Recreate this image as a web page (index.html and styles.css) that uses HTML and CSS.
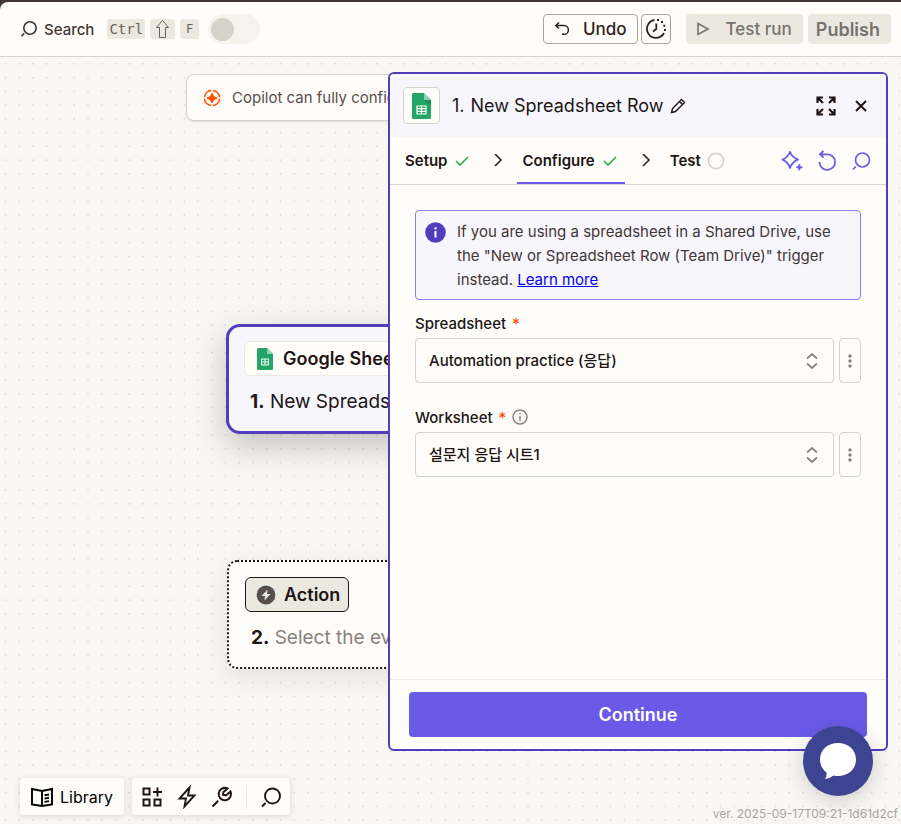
FILE: index.html
```html
<!DOCTYPE html>
<html lang="en">
<head>
<meta charset="utf-8">
<meta name="viewport" content="width=device-width, initial-scale=1">
<title>Zap editor</title>
<link rel="stylesheet" href="styles.css">
</head>
<body>
<div class="app">
  <header class="topbar">
    <button class="search" type="button">
      <svg width="18" height="18" viewBox="0 0 18 18" fill="none" stroke="currentColor" stroke-width="1.6"><circle cx="10" cy="8" r="6.200"/><path d="M4.200 13.400 1.500 16.200"/></svg>
      Search
    </button>
    <div class="keys">
      <kbd>Ctrl</kbd>
      <kbd><svg width="15" height="20" viewBox="0 0 15 20" fill="none" stroke="currentColor"><path d="M7.500 1.500 13.500 8.500H10.500V18.500H4.500V8.500H1.500Z"/></svg></kbd>
      <kbd class="small">F</kbd>
    </div>
    <label class="toggle"><input type="checkbox" aria-label="Publish Zap"><span class="knob"></span></label>
    <div class="actions">
      <button class="btn outline undo" type="button">
        <svg width="16" height="16" viewBox="0 0 16 16" fill="none" stroke="currentColor" stroke-width="1.500"><path d="M5 1.500 1.800 4.500 5 7.500M2 4.500H10A4.400 4.400 0 0 1 10 13.300H8"/></svg>
        Undo
      </button>
      <button class="btn outline history" type="button" aria-label="History">
        <svg width="22" height="22" viewBox="0 0 22 22" fill="none" stroke="currentColor" stroke-width="1.800"><path d="M9.500 2A9 9 0 1 0 19 15"/><path d="M11.300 5.500V11L8 13.500"/><path d="M12 2h2M16 4h2M18.300 7.800h2M19 12h2" stroke-width="2"/></svg>
      </button>
      <button class="btn muted test" type="button">
        <svg width="14" height="16" viewBox="0 0 14 16" fill="none" stroke="currentColor" stroke-width="1.600"><path d="M2 2.500 12 8 2 13.500Z"/></svg>
        Test run
      </button>
      <button class="btn muted publish" type="button">Publish</button>
    </div>
  </header>

  <main class="canvas">
    <svg class="dots" width="100%" height="100%" aria-hidden="true">
      <defs>
        <pattern id="dots" width="55" height="55" patternUnits="userSpaceOnUse">
          <g fill="#dddbd4">
            <circle cx="5.500" cy="6.800" r="0.900"/><circle cx="19.250" cy="6.800" r="0.900"/><circle cx="33" cy="6.800" r="0.900"/><circle cx="46.750" cy="6.800" r="0.900"/>
            <circle cx="5.500" cy="20.550" r="0.900"/><circle cx="19.250" cy="20.550" r="0.900"/><circle cx="33" cy="20.550" r="0.900"/><circle cx="46.750" cy="20.550" r="0.900"/>
            <circle cx="5.500" cy="34.300" r="0.900"/><circle cx="19.250" cy="34.300" r="0.900"/><circle cx="33" cy="34.300" r="0.900"/><circle cx="46.750" cy="34.300" r="0.900"/>
            <circle cx="5.500" cy="48.050" r="0.900"/><circle cx="19.250" cy="48.050" r="0.900"/><circle cx="33" cy="48.050" r="0.900"/><circle cx="46.750" cy="48.050" r="0.900"/>
          </g>
        </pattern>
      </defs>
      <rect width="100%" height="100%" fill="url(#dots)"/>
    </svg>

    <div class="copilot">
      <svg width="18" height="18" viewBox="0 0 18 18" fill="none"><circle cx="9" cy="9" r="7.600" stroke="#ff4f00" stroke-width="1.600" stroke-dasharray="10.340 1.600" stroke-dashoffset="-0.800"/><path d="M9 4Q9.800 8.200 14 9 9.800 9.800 9 14 8.200 9.800 4 9 8.200 8.200 9 4Z" fill="#ff4f00" stroke="#ff4f00" stroke-width="1.300"/></svg>
      <span>Copilot can fully configure this Zap for you</span>
    </div>

    <article class="node selected">
      <div class="chip app-chip">
        <svg width="16" height="22" viewBox="0 0 16 22"><path d="M1.500 0H10L16 6V20.500Q16 22 14.500 22H1.500Q0 22 0 20.500V1.500Q0 0 1.500 0Z" fill="#23a566"/><path d="M10 0 16 6H10Z" fill="#8ed1b1"/><path d="M4.500 11h7v6h-7zM8 11v6M4.500 14h7" fill="none" stroke="#fff"/></svg>
        Google Sheets
      </div>
      <p class="node-title"><strong>1.</strong> New Spreadsheet Row</p>
    </article>

    <article class="node empty">
      <div class="chip action-chip">
        <svg width="20" height="20" viewBox="0 0 20 20"><circle cx="10" cy="10" r="9.400" fill="#574e4c"/><path d="M11.500 4.500 5.500 11H9L8.500 15.500 14.500 9H11Z" fill="#ebe9df"/></svg>
        Action
      </div>
      <p class="node-title"><strong>2.</strong> <span>Select the event for your Zap to run</span></p>
    </article>

    <nav class="dock">
      <div class="dock-group">
        <button class="library" type="button">
          <svg width="22" height="22" viewBox="0 0 22 22" fill="none" stroke="currentColor" stroke-width="1.900"><path d="M1 3 11 5 21 3V18.500L11 20 1 18.500ZM11 5V20M13.500 9.300 18 8.500M13.500 12.600 18 11.800M13.500 15.900 18 15.100"/></svg>
          Library
        </button>
      </div>
      <div class="dock-group tools">
        <button type="button" aria-label="Add app"><svg width="22" height="22" viewBox="0 0 22 22" fill="none" stroke="currentColor" stroke-width="2"><path d="M2.500 2.500h6v6h-6zM2.500 13.500h6v6h-6zM13.500 13.500h6v6h-6zM16.500 1.500v9M12 6h9"/></svg></button>
        <button type="button" aria-label="Zap runs"><svg width="22" height="24" viewBox="0 0 22 24" fill="none" stroke="currentColor" stroke-width="1.900"><path d="M13.500 2.500 3.500 13.500H10L8.500 21.500 18.500 10.500H12Z"/></svg></button>
        <button type="button" aria-label="Settings"><svg width="22" height="22" viewBox="0 0 22 22" fill="none" stroke="currentColor" stroke-width="2"><path d="M7.200 14.800 1.500 20.500M16.500 2.500A6.200 6.200 0 1 0 19.500 5.500L15 9.500 12 8.800 12.500 6Z"/></svg></button>
        <span class="rule"></span>
        <button type="button" aria-label="Search steps"><svg width="22" height="22" viewBox="0 0 22 22" fill="none" stroke="currentColor" stroke-width="1.900"><circle cx="12.500" cy="10" r="7.500"/><path d="M5.500 17 2 20.500"/></svg></button>
      </div>
    </nav>
    <p class="version">ver. 2025-09-17T09:21-1d61d2cf</p>

    <section class="panel">
      <header class="panel-head">
        <span class="app-icon"><svg width="20" height="26" viewBox="0 0 20 26"><path d="M1.500 0H12L19 7V24.500Q19 26 17.500 26H1.500Q0 26 0 24.500V1.500Q0 0 1.500 0Z" fill="#23a566"/><path d="M12 7 19 13V7Z" fill="#1c8f57"/><path d="M12 0 19 7H12Z" fill="#8ed1b1"/><path d="M5 13h9v8H5zM9.500 13v8M5 15.700h9M5 18.300h9" fill="none" stroke="#fff" stroke-width="1.200"/></svg></span>
        <h2><span>1.</span> <span>New Spreadsheet Row</span></h2>
        <button class="icon edit" type="button" aria-label="Rename"><svg width="16" height="16" viewBox="0 0 16 16" fill="none" stroke="currentColor" stroke-width="1.400"><path d="M1.500 14.500 2.500 10.500 11.500 1.500 14.500 4.500 5.500 13.500ZM9.500 3.500 12.500 6.500"/></svg></button>
        <button class="icon expand" type="button" aria-label="Expand"><svg width="20" height="20" viewBox="0 0 20 20" fill="none" stroke="currentColor" stroke-width="2.200"><path d="M1.500 7V1.500H7M1.500 1.500 7 7M13 1.500H18.500V7M18.500 1.500 13 7M1.500 13V18.500H7M1.500 18.500 7 13M18.500 13V18.500H13M18.500 18.500 13 13"/></svg></button>
        <button class="icon" type="button" aria-label="Close"><svg width="12" height="12" viewBox="0 0 12 12" fill="none" stroke="currentColor" stroke-width="2"><path d="M1 1 11 11M11 1 1 11"/></svg></button>
      </header>
      <nav class="tabs">
        <a class="tab" href="#setup">Setup <svg width="14" height="12" viewBox="0 0 14 12" fill="none" stroke="#2fae4e" stroke-width="1.700"><path d="M1 6 5 10 13 2"/></svg></a>
        <svg class="sep" width="10" height="14" viewBox="0 0 10 14" fill="none" stroke="currentColor" stroke-width="1.600"><path d="M2 0 8 6 2 12"/></svg>
        <a class="tab current" href="#configure">Configure <svg width="14" height="12" viewBox="0 0 14 12" fill="none" stroke="#2fae4e" stroke-width="1.700"><path d="M1 6 5 10 13 2"/></svg></a>
        <svg class="sep" width="10" height="14" viewBox="0 0 10 14" fill="none" stroke="currentColor" stroke-width="1.600"><path d="M2 0 8 6 2 12"/></svg>
        <a class="tab" href="#test">Test <svg width="18" height="18" viewBox="0 0 18 18" fill="none" stroke="#d7d3c9" stroke-width="1.600"><circle cx="9" cy="9" r="7.600"/></svg></a>
        <div class="tab-tools">
          <button class="icon" type="button" aria-label="Copilot"><svg width="22" height="22" viewBox="0 0 22 22" fill="none" stroke="currentColor" stroke-width="1.800"><path d="M9 1.800Q11 7.500 17 9.700 11 12 9 18 7 12 1.500 9.700 7 7.500 9 1.800Z" stroke-linejoin="round"/><path d="M18.300 14.200v6M15.300 17.200h6" stroke-width="2"/></svg></button>
          <button class="icon" type="button" aria-label="Reset"><svg width="20" height="22" viewBox="0 0 20 22" fill="none" stroke="currentColor" stroke-width="1.800"><path d="M6.500 1 3 4.300 6.500 7.500M3 4.300H10.500A7.800 7.800 0 1 1 2.500 12"/></svg></button>
          <button class="icon" type="button" aria-label="Search fields"><svg width="20" height="20" viewBox="0 0 20 20" fill="none" stroke="currentColor" stroke-width="1.700"><circle cx="11.500" cy="9" r="7"/><path d="M4.800 15.500 2 18.300"/></svg></button>
        </div>
      </nav>
      <div class="panel-body">
        <div class="notice">
          <svg width="21" height="21" viewBox="0 0 21 21"><circle cx="10.500" cy="10.500" r="10.300" fill="#503ebd"/><path d="M10.500 5.200v2.200M10.500 9v6.500" stroke="#fff" stroke-width="2"/></svg>
          <p>If you are using a spreadsheet in a Shared Drive, use the "New or Spreadsheet Row (Team Drive)" trigger instead. <a href="#learn">Learn more</a></p>
        </div>
        <div class="field">
          <div class="label-row"><label for="spreadsheet">Spreadsheet</label><span class="req">*</span></div>
          <div class="control">
            <div class="select">
              <select id="spreadsheet"><option>Automation practice (응답)</option></select>
              <svg width="12" height="16" viewBox="0 0 12 16" fill="none" stroke="currentColor" stroke-width="1.800"><path d="M1 5.500 6 1 11 5.500M1 10.500 6 15 11 10.500"/></svg>
            </div>
            <button class="more" type="button" aria-label="Spreadsheet options"><svg width="4" height="16" viewBox="0 0 4 16" fill="currentColor"><circle cx="2" cy="3" r="1.700"/><circle cx="2" cy="8" r="1.700"/><circle cx="2" cy="13" r="1.700"/></svg></button>
          </div>
        </div>
        <div class="field">
          <div class="label-row"><label for="worksheet">Worksheet</label><span class="req">*</span>
            <svg width="16" height="16" viewBox="0 0 16 16" fill="none" stroke="#88827e" stroke-width="1.500"><circle cx="8" cy="8" r="7"/><path d="M8 4v1.600M8 7v5"/></svg></div>
          <div class="control">
            <div class="select">
              <select id="worksheet"><option>설문지 응답 시트1</option></select>
              <svg width="12" height="16" viewBox="0 0 12 16" fill="none" stroke="currentColor" stroke-width="1.800"><path d="M1 5.500 6 1 11 5.500M1 10.500 6 15 11 10.500"/></svg>
            </div>
            <button class="more" type="button" aria-label="Worksheet options"><svg width="4" height="16" viewBox="0 0 4 16" fill="currentColor"><circle cx="2" cy="3" r="1.700"/><circle cx="2" cy="8" r="1.700"/><circle cx="2" cy="13" r="1.700"/></svg></button>
          </div>
        </div>
      </div>
      <footer class="panel-foot"><button class="continue" type="button">Continue</button></footer>
    </section>

    <button class="chat" type="button" aria-label="Open chat">
      <svg width="38" height="38" viewBox="0 0 38 38" fill="#fff"><path d="M19 1C29 1 37 7.500 37 17.500S29 34 19 34Q16.500 34 14.500 33.500 10.500 36.800 6 37 8 34.500 7.500 30.500C3.500 27.500 1 23 1 17.500 1 7.500 9 1 19 1Z"/></svg>
    </button>
  </main>
</div>
</body>
</html>
```
FILE: styles.css
```css
* { box-sizing: border-box; }

body {
  margin: 0;
  background: #413735;
  color: #2d2321;
  font-family: Inter, "Noto Sans CJK KR", sans-serif;
  font-size: 15px;
}

button, select { font: inherit; color: inherit; }
button { padding: 0; border: 0; background: none; }
svg { display: block; flex: none; }
h2, p { margin: 0; }

.app {
  display: flex;
  flex-direction: column;
  min-height: 100vh;
  border-top: 2px solid #413735;
}

/* Top bar */
.topbar {
  display: flex;
  align-items: center;
  height: 55px;
  padding: 0 10px 0 20px;
  border-bottom: 1px solid #d7d3c9;
  border-top-left-radius: 8px;
  background: #fffdf9;
}
.search { display: flex; align-items: center; gap: 6px; font-weight: 500; color: #413735; }
.keys { display: flex; gap: 5px; margin-left: 13px; }
kbd {
  display: flex;
  align-items: center;
  height: 20px;
  padding: 0 2px;
  border-radius: 3px;
  background: #ebe9df;
  color: #6b6361;
  font: 14px/20px "DejaVu Sans Mono", monospace;
}
kbd:nth-child(2) { padding: 0 5px; }
kbd.small { padding: 0 6px; font-size: 12px; }
.toggle {
  display: flex;
  align-items: center;
  width: 52px;
  height: 30px;
  margin-left: 9px;
  padding: 3px;
  border-radius: 15px;
  background: #f5f3eb;
}
.toggle input { position: absolute; opacity: 0; margin: 0; }
.knob { width: 23px; height: 23px; border-radius: 50%; background: #d7d3c9; }
.toggle input:checked + .knob { margin-left: auto; }
.actions { display: flex; margin-left: auto; }
.btn {
  display: flex;
  align-items: center;
  justify-content: center;
  height: 30px;
  padding: 0 10px;
  border-radius: 4px;
  font-size: 17px;
  font-weight: 500;
}
.outline { border: 1px solid #a8a5a0; }
.undo { gap: 13px; }
.history { width: 30px; margin: 0 15px 0 3px; padding: 0; }
.muted { background: #ebe9df; color: #78716f; }
.test { gap: 16px; padding: 0 11px 0 10px; }
.publish { margin-left: 5px; padding: 0 11px 0 8px; font-size: 18px; font-weight: 600; }

/* Canvas */
.canvas { position: relative; flex: 1; min-height: 600px; overflow: hidden; background: #f8f7f3; }
.dots { position: absolute; inset: 0; }
.copilot {
  position: absolute;
  top: 17px;
  left: 186px;
  display: flex;
  align-items: center;
  gap: 11px;
  width: 528px;
  height: 47px;
  padding: 0 16px;
  border: 1px solid #d7d3c9;
  border-radius: 8px;
  background: #fffdf9;
  box-shadow: 0 1px 2px rgba(45, 35, 33, .1);
  color: #574e4c;
}
.node {
  position: absolute;
  display: flex;
  flex-direction: column;
  align-items: flex-start;
  gap: 12px;
  width: 446px;
  height: 110px;
  border-radius: 14px;
}
.selected {
  top: 267px;
  left: 226px;
  padding: 14px 15px;
  border: 3px solid #503ebd;
  background: #f7f6fd;
  box-shadow: 0 12px 32px rgba(45, 35, 33, .25);
}
.empty {
  top: 503px;
  left: 227px;
  height: 109px;
  padding: 15px 16px;
  border: 2px dotted #201515;
  border-radius: 10px;
  background: #fffdf9;
  box-shadow: 0 8px 24px rgba(45, 35, 33, .1);
}
.chip {
  display: flex;
  align-items: center;
  gap: 10px;
  height: 35px;
  padding: 0 12px;
  border: 1px solid #ebe9df;
  border-radius: 6px;
  background: #fffdf9;
  color: #201515;
  font-size: 18px;
  font-weight: 600;
  line-height: 20px;
}
.action-chip { gap: 8px; padding: 0 8px 0 10px; border-color: #201515; background: #ebe9df; }
.node-title { padding-left: 6px; font-size: 19px; line-height: 28px; white-space: nowrap; color: #201515; }
.node-title strong { font-weight: 700; }
.node-title span { color: #88827e; }

.dock { position: absolute; left: 20px; bottom: 9px; display: flex; gap: 8px; color: #201515; }
.dock-group {
  display: flex;
  align-items: center;
  height: 37px;
  padding: 0 11px;
  border-radius: 4px;
  background: #fffdf9;
  box-shadow: 0 1px 6px rgba(45, 35, 33, .15);
}
.library { display: flex; align-items: center; gap: 7px; color: #000; font-size: 16px; line-height: 18px; }
.tools { gap: 13px; padding: 0 8px 0 9px; }
.rule { width: 1px; height: 24px; background: #ebe9df; }
.version { position: absolute; right: 3px; bottom: 2px; font-size: 12px; line-height: 16px; color: #a8a5a0; }

/* Step panel */
.panel {
  position: absolute;
  top: 15px;
  right: 13px;
  bottom: 73px;
  display: flex;
  flex-direction: column;
  width: 500px;
  max-width: calc(100% - 26px);
  overflow: hidden;
  border: 2px solid #503ebd;
  border-radius: 6px;
  background: #fffdf9;
}
.panel-head { display: flex; align-items: center; height: 63px; padding: 0 19px 0 13px; background: #f7f6fd; color: #201515; }
.app-icon { display: grid; place-items: center; width: 37px; height: 37px; border: 1px solid #d7d3c9; border-radius: 4px; background: #fffdf9; }
.panel-head h2 { display: flex; gap: 6px; margin-left: 12px; font-size: 18px; font-weight: 400; }
.edit { margin-left: 6px; }
.expand { margin: 0 19px 0 auto; }
.tabs { display: flex; align-items: center; height: 48px; padding: 0 15px; border-bottom: 1px solid #d7d3c9; }
.tab {
  display: flex;
  align-items: center;
  gap: 8px;
  height: 47px;
  color: #201515;
  font-weight: 600;
  text-decoration: none;
}
.tab:last-of-type { gap: 6px; }
.current { padding: 0 8px 0 5px; border-top: 2px solid transparent; border-bottom: 2px solid #695be8; }
.sep { margin: 0 14px 0 24px; }
.sep + .tab:last-of-type { margin-left: 5px; }
.current + .sep { margin: 0 14px 0 16px; }
.tab-tools { display: flex; align-items: center; gap: 14px; margin-left: auto; color: #695be8; }
.panel-body { flex: 1; padding: 25px; }
.notice {
  display: flex;
  gap: 11px;
  padding: 9px 9px 7px;
  border: 1px solid #8a7ff8;
  border-radius: 4px;
  background: #f7f6fd;
  color: #413735;
  line-height: 24px;
}
.notice svg { margin-top: 2px; }
.notice a { color: #0000ee; }
.field { margin-top: 24px; color: #201515; }
.notice + .field { margin-top: 13px; }
.label-row { display: flex; align-items: center; gap: 6px; height: 20px; margin-bottom: 5px; font-weight: 500; }
.req { color: #ff4f00; }
.control { display: flex; gap: 5px; }
.select { display: grid; flex: 1; align-items: center; color: #88827e; }
.select select, .select svg { grid-area: 1 / 1; }
.select svg { justify-self: end; margin-right: 16px; pointer-events: none; }
select {
  width: 100%;
  height: 45px;
  padding: 0 40px 0 13px;
  appearance: none;
  border: 1px solid #d7d3c9;
  border-radius: 4px;
  background: #fffdf9;
  color: #201515;
  font-weight: 500;
}
.more { display: grid; place-items: center; width: 22px; border: 1px solid #d7d3c9; border-radius: 4px; color: #88827e; }
.panel-foot { padding: 12px 19px; border-top: 1px solid #ebe9df; }
.continue { width: 100%; height: 45px; border-radius: 4px; background: #695be8; color: #fffdf9; font-size: 18px; font-weight: 600; }

.chat {
  position: absolute;
  right: 28px;
  bottom: 28px;
  display: grid;
  place-items: center;
  width: 70px;
  height: 70px;
  border-radius: 50%;
  background: #3d4592;
  box-shadow: 0 4px 20px rgba(45, 35, 33, .2);
}
```
